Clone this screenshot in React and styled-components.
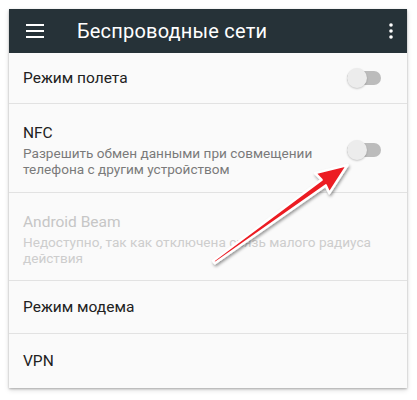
import React from "react";
import styled, { createGlobalStyle } from "styled-components";

const GlobalStyle = createGlobalStyle`
    html, body {
        margin: 0;
        padding: 0;
        background: #ffffff;
        font-family: Roboto, "Noto Sans", Arial, sans-serif;
    }
`;

const Page = styled.div`
    position: relative;
    width: 417px;
    height: 400px;
    padding: 9px 10px 0 9px;
    box-sizing: border-box;
`;

const Card = styled.div`
    width: 398px;
    background: #fafafa;
    box-shadow: 0 1px 2px rgba(0,0,0,.25), 0 2px 5px rgba(0,0,0,.15);
    display: flex;
    flex-direction: column;
`;

const Toolbar = styled.div`
    height: 44px;
    background: #263238;
    display: flex;
    align-items: center;
    padding: 0 14px 0 17px;
    color: #fff;
`;

const Title = styled.div`
    flex: 1;
    margin-left: 33px;
    font-size: 20px;
    font-weight: 400;
    letter-spacing: 0.2px;
`;

const Row = styled.div`
    height: ${({h}) => h}px;
    box-sizing: border-box;
    display: flex;
    align-items: center;
    padding: ${({two}) => two ? "4px" : "0"} 26px 0 14px;
    border-bottom: ${({last}) => last ? "none" : "1px solid #e2e2e2"};
`;

const RowText = styled.div`
    flex: 1;
    display: flex;
    flex-direction: column;
`;

const RowTitle = styled.div`
    font-size: 15.5px;
    color: ${({disabled}) => disabled ? "#c6c6c6" : "#212121"};
    line-height: 20px;
`;

const RowSummary = styled.div`
    font-size: 13.6px;
    line-height: 16px;
    margin-top: 2px;
    color: ${({disabled}) => disabled ? "#cdcdcd" : "#7a7a7a"};
`;

const Switch = styled.div`
    position: relative;
    flex: none;
    margin-left: 14px;
    width: 34px;
    height: 14px;
    border-radius: 7px;
    background: #bcbcbc;
`;

const Thumb = styled.div`
    position: absolute;
    left: 0;
    top: -3px;
    width: 20px;
    height: 20px;
    border-radius: 50%;
    background: #ececec;
    box-shadow: 0 1px 2px rgba(0,0,0,.2);
`;

const Overlay = styled.svg`
    position: absolute;
    left: 0;
    top: 0;
    pointer-events: none;
`;

const Menu = () => (
    <svg width="18" height="14" viewBox="0 0 18 14">
        <rect x="0" y="0" width="18" height="2" fill="#fff"/>
        <rect x="0" y="6" width="18" height="2" fill="#fff"/>
        <rect x="0" y="12" width="18" height="2" fill="#fff"/>
    </svg>
);

const Dots = () => (
    <svg width="4" height="16" viewBox="0 0 4 16">
        <circle cx="2" cy="2" r="1.8" fill="#fff"/>
        <circle cx="2" cy="8" r="1.8" fill="#fff"/>
        <circle cx="2" cy="14" r="1.8" fill="#fff"/>
    </svg>
);

const Toggle = () => (
    <Switch><Thumb/></Switch>
);

export default function App() {
    return (
        <>
            <GlobalStyle/>
            <Page>
                <Card>
                    <Toolbar>
                        <Menu/>
                        <Title>Беспроводные сети</Title>
                        <Dots/>
                    </Toolbar>
                    <Row h={51}>
                        <RowText><RowTitle>Режим полета</RowTitle></RowText>
                        <Toggle/>
                    </Row>
                    <Row h={89} two>
                        <RowText>
                            <RowTitle>NFC</RowTitle>
                            <RowSummary>Разрешить обмен данными при совмещении телефона с другим устройством</RowSummary>
                        </RowText>
                        <Toggle/>
                    </Row>
                    <Row h={88} two>
                        <RowText>
                            <RowTitle disabled>Android Beam</RowTitle>
                            <RowSummary disabled>Недоступно, так как отключена связь малого радиуса действия</RowSummary>
                        </RowText>
                    </Row>
                    <Row h={53}>
                        <RowText><RowTitle>Режим модема</RowTitle></RowText>
                    </Row>
                    <Row h={54} last>
                        <RowText><RowTitle>VPN</RowTitle></RowText>
                    </Row>
                </Card>
                <Overlay width="417" height="400">
                    <defs>
                        <filter id="sh" x="-20%" y="-20%" width="140%" height="140%">
                            <feDropShadow dx="1" dy="2" stdDeviation="1.5" floodColor="#000" floodOpacity="0.4"/>
                        </filter>
                    </defs>
                    <polygon
                        points="213.1,260.8 214.9,263.2 325.8,185.4 329.3,193.1 347.5,165 315.1,173.1 321.6,179.8"
                        fill="#ec1c24"
                        stroke="#fff"
                        strokeWidth="2.5"
                        strokeLinejoin="round"
                        filter="url(#sh)"
                    />
                </Overlay>
            </Page>
        </>
    );
}
